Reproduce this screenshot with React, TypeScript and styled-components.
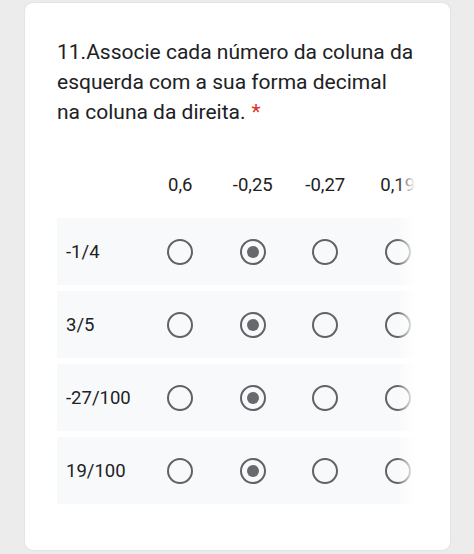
import React from "react";
import styled, { createGlobalStyle } from "styled-components";

const GlobalStyle = createGlobalStyle`
  body {
    margin: 0;
    background: #ececec;
    font-family: Roboto, "Liberation Sans", sans-serif;
  }
`;

const Page = styled.div`
  padding: 3px 24px 4px 25px;
`;

const Card = styled.div`
  background: #fff;
  border-radius: 8px;
  box-shadow: 0 0 2px rgba(0, 0, 0, 0.12);
  height: 547px;
  box-sizing: border-box;
  padding: 34px 35px 48px 32px;
`;

const Title = styled.div`
  font-size: 21px;
  line-height: 30px;
  color: #202124;
  white-space: nowrap;
`;

const Required = styled.span`
  color: #d93025;
  margin-left: 6px;
`;

const Scroller = styled.div`
  position: relative;
  overflow: hidden;
  margin-top: 34px;
`;

const Fade = styled.div`
  position: absolute;
  top: 0;
  right: 0;
  bottom: 0;
  width: 18px;
  background: linear-gradient(to right, rgba(255, 255, 255, 0), #fff);
`;

const Row = styled.div<{ $shaded?: boolean }>`
  display: grid;
  grid-template-columns: 87px repeat(4, 72.5px);
  align-items: center;
  width: 377px;
  height: ${(p) => (p.$shaded ? "67px" : "48px")};
  margin-bottom: ${(p) => (p.$shaded ? "6px" : "9px")};
  background: ${(p) => (p.$shaded ? "#f8f9fa" : "transparent")};
  font-size: 18.5px;
  color: #202124;
`;

const Label = styled.div`
  padding-left: 9px;
`;

const Head = styled.div`
  text-align: center;
`;

const Cell = styled.div`
  display: flex;
  justify-content: center;
`;

const Radio = styled.div<{ $checked?: boolean }>`
  width: 26px;
  height: 26px;
  box-sizing: border-box;
  border: 2.5px solid #5f6368;
  border-radius: 50%;
  display: flex;
  align-items: center;
  justify-content: center;

  &::after {
    content: "";
    display: ${(p) => (p.$checked ? "block" : "none")};
    width: 12px;
    height: 12px;
    border-radius: 50%;
    background: #66696d;
  }
`;

const columns = ["0,6", "-0,25", "-0,27", "0,19"];
const rows = ["-1/4", "3/5", "-27/100", "19/100"];

const App: React.FC = function () {
  return (
    <Page>
      <GlobalStyle />
      <Card>
        <Title>
          11.Associe cada número da coluna da
          <br />
          esquerda com a sua forma decimal
          <br />
          na coluna da direita.<Required>*</Required>
        </Title>
        <Scroller>
          <Row>
            <div />
            {columns.map((c) => (
              <Head key={c}>{c}</Head>
            ))}
          </Row>
          {rows.map((r) => (
            <Row key={r} $shaded>
              <Label>{r}</Label>
              {columns.map((c, i) => (
                <Cell key={c}>
                  <Radio $checked={i === 1} />
                </Cell>
              ))}
            </Row>
          ))}
          <Fade />
        </Scroller>
      </Card>
    </Page>
  );
};

export default App;
